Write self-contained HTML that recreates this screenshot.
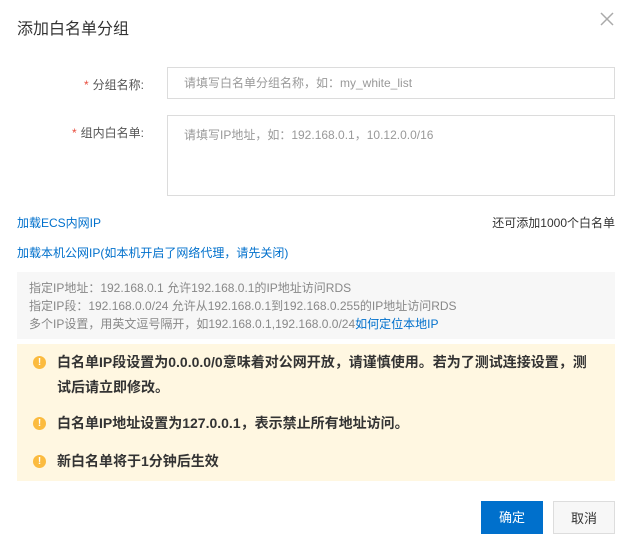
<!DOCTYPE html>
<html><head><meta charset="utf-8"><style>
*{margin:0;padding:0;box-sizing:border-box}
body{width:630px;height:540px;background:#fff;font-family:"Liberation Sans","Noto Sans CJK SC",sans-serif;position:relative;overflow:hidden;color:#333}
.a{position:absolute}
.title{left:17px;top:15px;font-size:16px;color:#333}
.lbl{font-size:12px;color:#555;text-align:right;width:130px;left:14px}
.lbl b{color:#e84c3d;font-weight:normal;margin-right:4px}
.inp{left:167px;width:448px;border:1px solid #dcdcdc;font-size:12px;color:#999;padding-left:16px}
.link{color:#0070cc;font-size:12px;left:17px}
.gray{left:17px;top:272px;width:598px;height:67px;background:#f7f7f7;font-size:12px;color:#888;padding:7px 12px;line-height:18px}
.warn{left:17px;top:344px;width:598px;height:137px;background:#fff7e1;font-size:14px;color:#333;font-weight:bold}
.ic{position:absolute;width:13px;height:13px;border-radius:50%;background:#fbbb3f;color:#fff;font-size:10px;text-align:center;line-height:13px;left:16px}
.btn{top:501px;height:33px;width:62px;font-size:13px;text-align:center;line-height:33px}
</style></head><body>
<div class="a title">添加白名单分组</div>
<svg class="a" style="left:600px;top:12px" width="14" height="14"><path d="M1 1L13 13M13 1L1 13" stroke="#aaa" stroke-width="1.5"/></svg>
<div class="a lbl" style="top:76px"><b>*</b>分组名称:</div>
<div class="a inp" style="top:67px;height:32px;line-height:30px">请填写白名单分组名称，如：my_white_list</div>
<div class="a lbl" style="top:124px"><b>*</b>组内白名单:</div>
<div class="a inp" style="top:115px;height:81px;padding-top:10px">请填写IP地址，如：192.168.0.1，10.12.0.0/16</div>
<div class="a link" style="top:214px">加载ECS内网IP</div>
<div class="a" style="right:15px;top:214px;font-size:12px;color:#333">还可添加1000个白名单</div>
<div class="a link" style="top:244px">加载本机公网IP(如本机开启了网络代理，请先关闭)</div>
<div class="a gray">指定IP地址：192.168.0.1 允许192.168.0.1的IP地址访问RDS<br>指定IP段：192.168.0.0/24 允许从192.168.0.1到192.168.0.255的IP地址访问RDS<br>多个IP设置，用英文逗号隔开，如192.168.0.1,192.168.0.0/24<span style="color:#0070cc">如何定位本地IP</span></div>
<div class="a warn">
<div class="ic" style="top:12px">!</div>
<div class="a" style="left:40px;top:6px;width:560px;line-height:25px;white-space:nowrap">白名单IP段设置为0.0.0.0/0意味着对公网开放，请谨慎使用。若为了测试连接设置，测<br>试后请立即修改。</div>
<div class="ic" style="top:73px">!</div>
<div class="a" style="left:40px;top:67px;line-height:25px">白名单IP地址设置为127.0.0.1，表示禁止所有地址访问。</div>
<div class="ic" style="top:111px">!</div>
<div class="a" style="left:40px;top:105px;line-height:25px">新白名单将于1分钟后生效</div>
</div>
<div class="a btn" style="left:481px;background:#0070cc;color:#fff">确定</div>
<div class="a btn" style="left:553px;border:1px solid #ddd;background:#f7f7f7;color:#333">取消</div>
</body></html>
